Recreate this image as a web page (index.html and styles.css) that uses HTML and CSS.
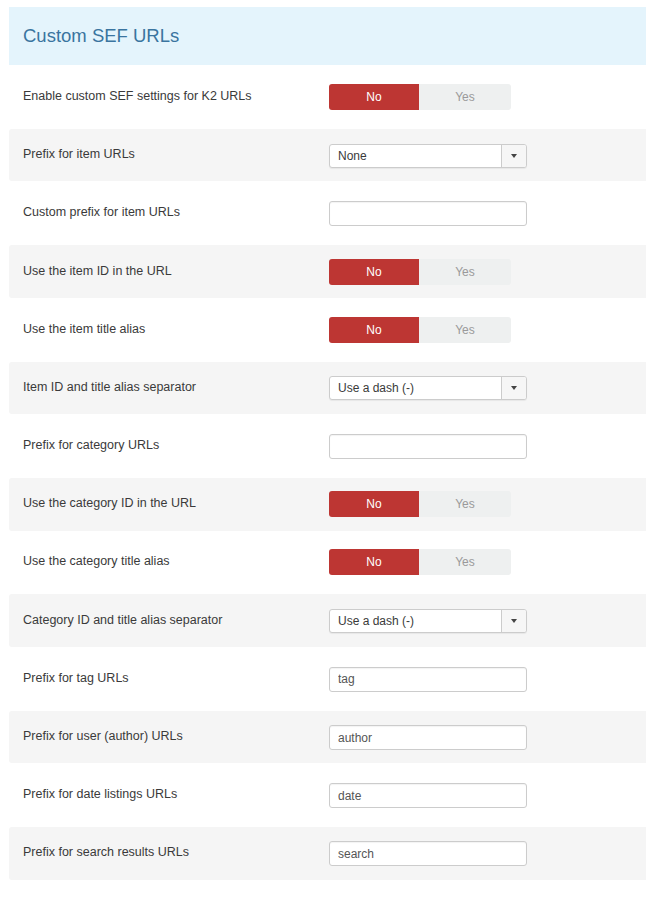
FILE: index.html
```html
<!DOCTYPE html>
<html>
<head>
<meta charset="utf-8">
<title>Custom SEF URLs</title>
<link rel="stylesheet" href="styles.css">
</head>
<body>
<div class="panel">
  <div class="header">Custom SEF URLs</div>
  <div class="rows">
    <div class="row">
      <div class="label">Enable custom SEF settings for K2 URLs</div>
      <div class="toggle"><span class="no">No</span><span class="yes">Yes</span></div>
    </div>
    <div class="row alt">
      <div class="label">Prefix for item URLs</div>
      <div class="select"><span class="sel-text">None</span><span class="sel-arrow"><i class="caret"></i></span></div>
    </div>
    <div class="row">
      <div class="label">Custom prefix for item URLs</div>
      <input class="field" type="text" value="">
    </div>
    <div class="row alt">
      <div class="label">Use the item ID in the URL</div>
      <div class="toggle"><span class="no">No</span><span class="yes">Yes</span></div>
    </div>
    <div class="row">
      <div class="label">Use the item title alias</div>
      <div class="toggle"><span class="no">No</span><span class="yes">Yes</span></div>
    </div>
    <div class="row alt">
      <div class="label">Item ID and title alias separator</div>
      <div class="select"><span class="sel-text">Use a dash (-)</span><span class="sel-arrow"><i class="caret"></i></span></div>
    </div>
    <div class="row">
      <div class="label">Prefix for category URLs</div>
      <input class="field" type="text" value="">
    </div>
    <div class="row alt">
      <div class="label">Use the category ID in the URL</div>
      <div class="toggle"><span class="no">No</span><span class="yes">Yes</span></div>
    </div>
    <div class="row">
      <div class="label">Use the category title alias</div>
      <div class="toggle"><span class="no">No</span><span class="yes">Yes</span></div>
    </div>
    <div class="row alt">
      <div class="label">Category ID and title alias separator</div>
      <div class="select"><span class="sel-text">Use a dash (-)</span><span class="sel-arrow"><i class="caret"></i></span></div>
    </div>
    <div class="row">
      <div class="label">Prefix for tag URLs</div>
      <input class="field" type="text" value="tag">
    </div>
    <div class="row alt">
      <div class="label">Prefix for user (author) URLs</div>
      <input class="field" type="text" value="author">
    </div>
    <div class="row">
      <div class="label">Prefix for date listings URLs</div>
      <input class="field" type="text" value="date">
    </div>
    <div class="row alt">
      <div class="label">Prefix for search results URLs</div>
      <input class="field" type="text" value="search">
    </div>
  </div>
</div>
</body>
</html>
```

FILE: styles.css
```css
* { box-sizing: border-box; }

html, body {
  margin: 0;
  padding: 0;
  background: #ffffff;
}

body {
  font-family: "Liberation Sans", Helvetica, Arial, sans-serif;
  color: #3a3a3a;
}

.panel {
  margin: 7px 0 0 9px;
}

.header {
  height: 58px;
  background: #e4f4fc;
  display: flex;
  align-items: center;
  padding-left: 14px;
  font-size: 18.5px;
  color: #3a74a0;
}

.rows {
  display: flex;
  flex-direction: column;
  gap: 5.8px;
  padding-top: 5.8px;
}

.row {
  height: 52.4px;
  display: flex;
  align-items: center;
  padding-left: 14px;
}

.row.alt {
  background: #f5f5f5;
  border-radius: 3px 0 0 3px;
}

.label {
  width: 306px;
  flex: none;
  font-size: 12.5px;
  color: #3a3a3a;
  padding-bottom: 2px;
}

.toggle {
  display: flex;
  width: 182px;
  height: 26px;
  border-radius: 3px;
  overflow: hidden;
  font-size: 12px;
}

.toggle span {
  display: flex;
  align-items: center;
  justify-content: center;
}

.toggle .no {
  width: 90px;
  background: #bd3633;
  color: #ffffff;
}

.toggle .yes {
  flex: 1;
  background: #eef0f0;
  color: #9a9a9a;
}

.select {
  display: flex;
  width: 198px;
  height: 24px;
  margin-top: 1px;
  border: 1px solid #cccccc;
  border-radius: 3px;
  background: #ffffff;
  box-shadow: 0 1px 1px rgba(0, 0, 0, 0.06);
  overflow: hidden;
}

.sel-text {
  flex: 1;
  display: flex;
  align-items: center;
  padding-left: 8px;
  font-size: 12px;
  color: #3a3a3a;
}

.sel-arrow {
  width: 25px;
  display: flex;
  align-items: center;
  justify-content: center;
  border-left: 1px solid #cccccc;
  background: #f6f6f6;
}

.caret {
  display: block;
  width: 0;
  height: 0;
  border-left: 3.5px solid transparent;
  border-right: 3.5px solid transparent;
  border-top: 4px solid #444444;
}

.field {
  display: block;
  width: 198px;
  height: 25px;
  margin: 1px 0 0 0;
  padding: 0 8px;
  border: 1px solid #cccccc;
  border-radius: 3px;
  background: #ffffff;
  box-shadow: inset 0 1px 1px rgba(0, 0, 0, 0.05);
  font-family: "Liberation Sans", Helvetica, Arial, sans-serif;
  font-size: 12px;
  color: #555555;
  outline: none;
}
```
